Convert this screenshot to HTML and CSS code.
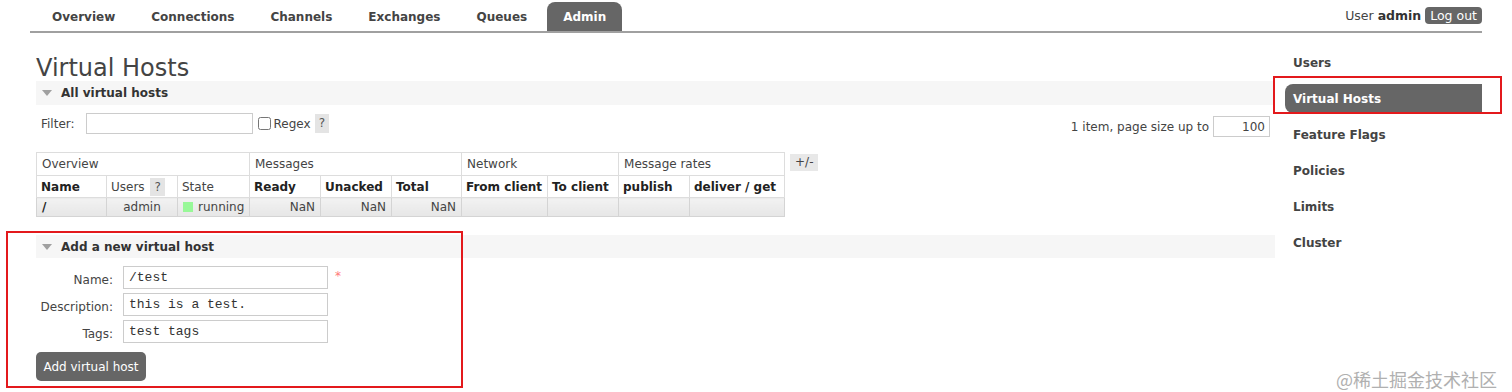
FILE: index.html
```html
<!DOCTYPE html>
<html>
  <head>
    <meta charset="utf-8" />
    <title>RabbitMQ Management</title>
    <link rel="stylesheet" href="styles.css">
  </head>
  <body>
    <div class="header">
      <ul class="menu">
        <li><a href="#">Overview</a></li>
        <li><a href="#">Connections</a></li>
        <li><a href="#">Channels</a></li>
        <li><a href="#">Exchanges</a></li>
        <li><a href="#">Queues</a></li>
        <li><a href="#" class="selected">Admin</a></li>
      </ul>
      <div class="login">
        User <b>admin</b>
        <button class="logout">Log out</button>
      </div>
    </div>

    <div class="page">
      <div class="main">
        <h1>Virtual Hosts</h1>

        <div class="section">
          <h2><span class="arrow"></span>All virtual hosts</h2>
          <div class="hider">
            <div class="filter-row">
              <div class="filter">
                <label for="filter">Filter:</label>
                <input id="filter" type="text" />
                <input id="regex" type="checkbox" />
                <label for="regex">Regex</label>
                <span class="help">?</span>
              </div>
              <div class="paging">
                1 item, page size up to
                <input type="text" value="100" />
              </div>
            </div>

            <div class="table-row">
              <table class="list">
                <colgroup>
                  <col style="width: 70px" />
                  <col style="width: 71px" />
                  <col style="width: 72px" />
                  <col style="width: 71px" />
                  <col style="width: 71px" />
                  <col style="width: 70px" />
                  <col style="width: 86px" />
                  <col style="width: 71px" />
                  <col style="width: 71px" />
                  <col style="width: 95px" />
                </colgroup>
                <thead>
                  <tr class="group">
                    <th colspan="3">Overview</th>
                    <th colspan="3">Messages</th>
                    <th colspan="2">Network</th>
                    <th colspan="2">Message rates</th>
                  </tr>
                  <tr class="cols">
                    <th>Name</th>
                    <th class="normal">Users <span class="help">?</span></th>
                    <th class="normal">State</th>
                    <th>Ready</th>
                    <th>Unacked</th>
                    <th>Total</th>
                    <th>From client</th>
                    <th>To client</th>
                    <th>publish</th>
                    <th>deliver / get</th>
                  </tr>
                </thead>
                <tbody>
                  <tr class="alt1">
                    <td><b>/</b></td>
                    <td class="c">admin</td>
                    <td><span class="status-green"></span>running</td>
                    <td class="r">NaN</td>
                    <td class="r">NaN</td>
                    <td class="r">NaN</td>
                    <td></td>
                    <td></td>
                    <td></td>
                    <td></td>
                  </tr>
                </tbody>
              </table>
              <span class="plus-minus">+/-</span>
            </div>
          </div>
        </div>

        <div class="section add">
          <h2><span class="arrow"></span>Add a new virtual host</h2>
          <div class="hider">
            <form class="vhost-form">
              <div class="form-row">
                <label for="name">Name:</label>
                <input id="name" type="text" value="/test" />
                <span class="mand">*</span>
              </div>
              <div class="form-row">
                <label for="description">Description:</label>
                <input id="description" type="text" value="this is a test." />
              </div>
              <div class="form-row">
                <label for="tags">Tags:</label>
                <input id="tags" type="text" value="test tags" />
              </div>
              <button class="add-button">Add virtual host</button>
            </form>
          </div>
        </div>
      </div>

      <div class="rhs">
        <ul>
          <li><a href="#">Users</a></li>
          <li><a href="#" class="selected">Virtual Hosts</a></li>
          <li><a href="#">Feature Flags</a></li>
          <li><a href="#">Policies</a></li>
          <li><a href="#">Limits</a></li>
          <li><a href="#">Cluster</a></li>
        </ul>
      </div>
    </div>

    <!-- red marks from the original screenshot -->
    <div class="mark mark-form"></div>
    <div class="mark mark-rhs"></div>

    <div class="watermark">@稀土掘金技术社区</div>
  </body>
</html>
```

FILE: styles.css
```css
* {
  box-sizing: border-box;
}

body {
  margin: 0;
  padding: 0;
  font: 12px 'DejaVu Sans', Verdana, sans-serif;
  color: #444;
  background: #fff;
  position: relative;
  height: 392px;
  overflow: hidden;
}

a {
  color: #444;
  font-weight: bold;
  text-decoration: none;
}

/* header */
.header {
  display: flex;
  align-items: flex-start;
  justify-content: space-between;
  margin: 0 30px;
  padding-top: 2px;
  border-bottom: 2px solid #a0a0a0;
  height: 33px;
}

.menu {
  display: flex;
  list-style: none;
  margin: 0;
  padding: 0 0 0 6px;
}

.menu li a {
  display: block;
  height: 29px;
  line-height: 30px;
  padding: 0 16px;
  margin-right: 4px;
}

.menu li a.selected {
  background: #666;
  color: #fff;
  border-radius: 8px 8px 0 0;
}

.login {
  display: flex;
  align-items: center;
  gap: 4px;
  margin-top: 5px;
  font-size: 12.5px;
  color: #444;
}

.login b {
  color: #333;
}

.logout {
  font: 12.5px 'DejaVu Sans', Verdana, sans-serif;
  background: #666;
  color: #fff;
  border: none;
  border-radius: 4px;
  height: 17px;
  padding: 0 5px;
  line-height: 17px;
}

/* page */
.page {
  display: flex;
}

.main {
  flex: 1;
  padding-left: 36px;
}

h1 {
  font-size: 24px;
  font-weight: normal;
  line-height: 26px;
  margin: 22px 0 0 0;
  color: #444;
}

.section h2 {
  display: flex;
  align-items: center;
  height: 24px;
  margin: 0;
  padding-left: 6px;
  font-size: 12px;
  font-weight: bold;
  color: #333;
  background: #f6f6f6;
}

.arrow {
  width: 0;
  height: 0;
  border-left: 5px solid transparent;
  border-right: 5px solid transparent;
  border-top: 6px solid #a0a0a0;
  margin-right: 9px;
}

.hider {
  padding: 8px 0 0 0;
}

.filter-row {
  display: flex;
  justify-content: space-between;
  align-items: flex-start;
}

.filter {
  display: flex;
  align-items: center;
  height: 21px;
  padding-left: 5px;
}

.filter input[type='text'] {
  width: 167px;
  height: 21px;
  margin: 0 4px 0 11px;
  border: 1px solid #ccc;
}

.filter input[type='checkbox'] {
  width: 13px;
  height: 13px;
  margin: 0 3px 0 1px;
}

.filter .help {
  margin-left: 4px;
}

.help {
  display: inline-block;
  background: #e4e4e4;
  color: #555;
  padding: 0 4px;
  line-height: 19px;
  font-weight: normal;
}

.paging {
  display: flex;
  align-items: center;
  gap: 4px;
  margin: 3px 5px 0 0;
  color: #444;
}

.paging input {
  width: 57px;
  height: 21px;
  border: 1px solid #ccc;
  text-align: right;
  font: 12px 'DejaVu Sans', Verdana, sans-serif;
  color: #444;
  padding-right: 4px;
}

.table-row {
  display: flex;
  align-items: flex-start;
  margin-top: 15px;
}

table.list {
  border-collapse: collapse;
  table-layout: fixed;
  width: 748px;
  border: 1px solid #ddd;
  font-size: 12px;
}

table.list th,
table.list td {
  border: 1px solid #ddd;
  text-align: left;
  white-space: nowrap;
  overflow: hidden;
}

table.list tr.group th {
  height: 23px;
  font-weight: normal;
  padding: 0 5px;
}

table.list tr.cols th {
  height: 22px;
  padding: 0 4px;
  font-weight: bold;
  color: #222;
}

table.list tr.cols th.normal {
  font-weight: normal;
  color: #444;
}

table.list tr.cols .help {
  line-height: 18px;
  margin-left: 2px;
}

table.list tr.alt1 td {
  height: 19px;
  padding: 0 5px;
  background: linear-gradient(#f2f2f2, #e6e6e6);
  border-color: #d4d4d4;
}

table.list td b {
  color: #222;
  font-weight: bold;
}

table.list td.c {
  text-align: center;
}

table.list td.r {
  text-align: right;
}

.status-green {
  display: inline-block;
  width: 10px;
  height: 10px;
  background: #98f898;
  margin-right: 5px;
  vertical-align: -1px;
}

.plus-minus {
  margin: 2px 0 0 5px;
  background: #e8e8e8;
  color: #444;
  height: 17px;
  line-height: 17px;
  padding: 0 5px;
}

.section.add {
  margin-top: 18px;
}

.section.add h2 {
  height: 23px;
}

.vhost-form {
  margin: 0;
}

.form-row {
  display: flex;
  align-items: flex-start;
  height: 27px;
}

.form-row label {
  width: 77px;
  text-align: right;
  margin-top: 7px;
}

.form-row input {
  width: 205px;
  height: 23px;
  margin-left: 10px;
  border: 1px solid #ccc;
  padding: 0 5px;
  font: 13px 'Liberation Mono', 'Courier New', monospace;
  color: #333;
}

.mand {
  color: #f77;
  margin: 3px 0 0 7px;
  font-size: 12px;
}

.add-button {
  margin-top: 5px;
  width: 110px;
  height: 29px;
  background: #666;
  color: #fff;
  border: none;
  border-radius: 5px;
  white-space: nowrap;
  padding: 0;
  font: 12px 'DejaVu Sans', Verdana, sans-serif;
}

/* right hand side */
.rhs {
  width: 197px;
  margin: 0 30px 0 10px;
}

.rhs ul {
  list-style: none;
  margin: 0;
  padding: 15px 0 0 0;
}

.rhs li {
  margin-bottom: 7px;
}

.rhs a {
  display: block;
  height: 29px;
  line-height: 30px;
  padding-left: 8px;
}

.rhs a.selected {
  background: #666;
  color: #fff;
  border-radius: 8px 0 0 8px;
}

/* marks and watermark laid over the shot */
.mark {
  position: absolute;
  border: 2px solid #e3191c;
}

.mark-form {
  left: 6px;
  top: 231px;
  width: 457px;
  height: 157px;
}

.mark-rhs {
  left: 1273px;
  top: 76px;
  width: 229px;
  height: 38px;
}

.watermark {
  position: absolute;
  right: 15px;
  top: 367px;
  font: 18px 'Noto Sans CJK SC', sans-serif;
  color: #b0b0b0;
  line-height: 24px;
}
```
